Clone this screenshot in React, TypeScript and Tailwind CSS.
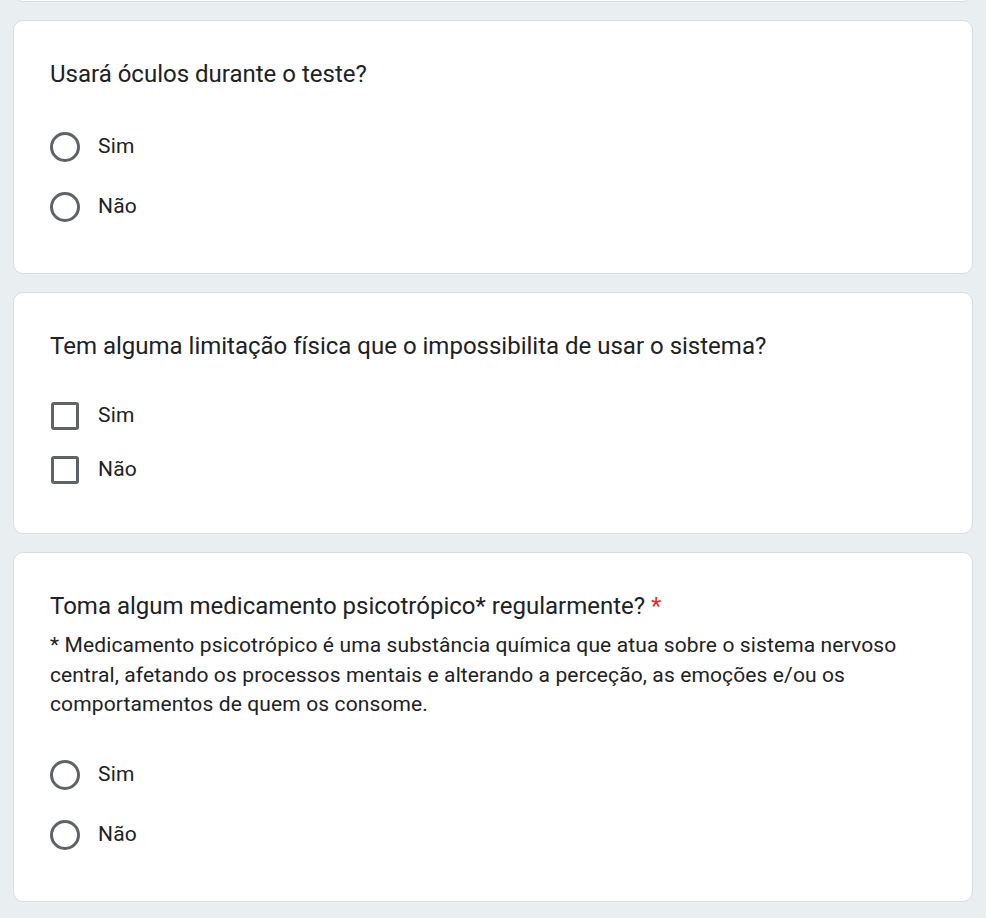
import React from "react";

type Option = { label: string };

function Radio() {
    return <span className="block w-[30px] h-[30px] rounded-full border-[3px] border-[#5f6368] shrink-0" />;
}

function Checkbox() {
    return (
        <span className="flex w-[30px] h-[30px] items-center justify-center shrink-0">
            <span className="block w-[28px] h-[28px] rounded-[3px] border-[3px] border-[#5f6368]" />
        </span>
    );
}

function Card({ children }: { children: React.ReactNode }) {
    return (
        <div className="bg-white border border-[#dadce0] rounded-[10px] px-[36px] pt-[35px] pb-[36px]">
            {children}
        </div>
    );
}

function Question({
    title,
    required,
    description,
    type,
    options,
}: {
    title: string;
    required?: boolean;
    description?: string[];
    type: "radio" | "checkbox";
    options: Option[];
}) {
    const rowH = type === "radio" ? "h-[60px]" : "h-[54px]";
    return (
        <Card>
            <div className="text-[24px] leading-[36px] text-[#202124]">
                {title}
                {required && <span className="text-[#d93025]"> *</span>}
            </div>
            {description && (
                <div className="mt-[7px] text-[21px] leading-[29.5px] tracking-[0.12px] text-[#202124]">
                    {description.map((line) => (
                        <div key={line}>{line}</div>
                    ))}
                </div>
            )}
            <div className="mt-[25px] flex flex-col">
                {options.map((o) => (
                    <div key={o.label} className={`flex items-center gap-[18px] ${rowH}`}>
                        {type === "radio" ? <Radio /> : <Checkbox />}
                        <span className="text-[21px] tracking-[0.2px] text-[#202124]">{o.label}</span>
                    </div>
                ))}
            </div>
        </Card>
    );
}

export default function App() {
    const simNao = [{ label: "Sim" }, { label: "Não" }];
    return (
        <div
            className="min-h-[918px] bg-[#e9eef1] px-[13px] overflow-hidden"
            style={{ fontFamily: "Roboto, 'Noto Sans', Arial, sans-serif" }}
        >
            <div className="w-[960px] flex flex-col gap-[18px]">
                <div className="-mt-[98px] h-[100px] bg-white border border-[#dadce0] rounded-[10px]" />
                <Question title="Usará óculos durante o teste?" type="radio" options={simNao} />
                <Question
                    title="Tem alguma limitação física que o impossibilita de usar o sistema?"
                    type="checkbox"
                    options={simNao}
                />
                <Question
                    title="Toma algum medicamento psicotrópico* regularmente?"
                    required
                    description={[
                        "* Medicamento psicotrópico é uma substância química que atua sobre o sistema nervoso",
                        "central, afetando os processos mentais e alterando a perceção, as emoções e/ou os",
                        "comportamentos de quem os consome.",
                    ]}
                    type="radio"
                    options={simNao}
                />
            </div>
        </div>
    );
}
